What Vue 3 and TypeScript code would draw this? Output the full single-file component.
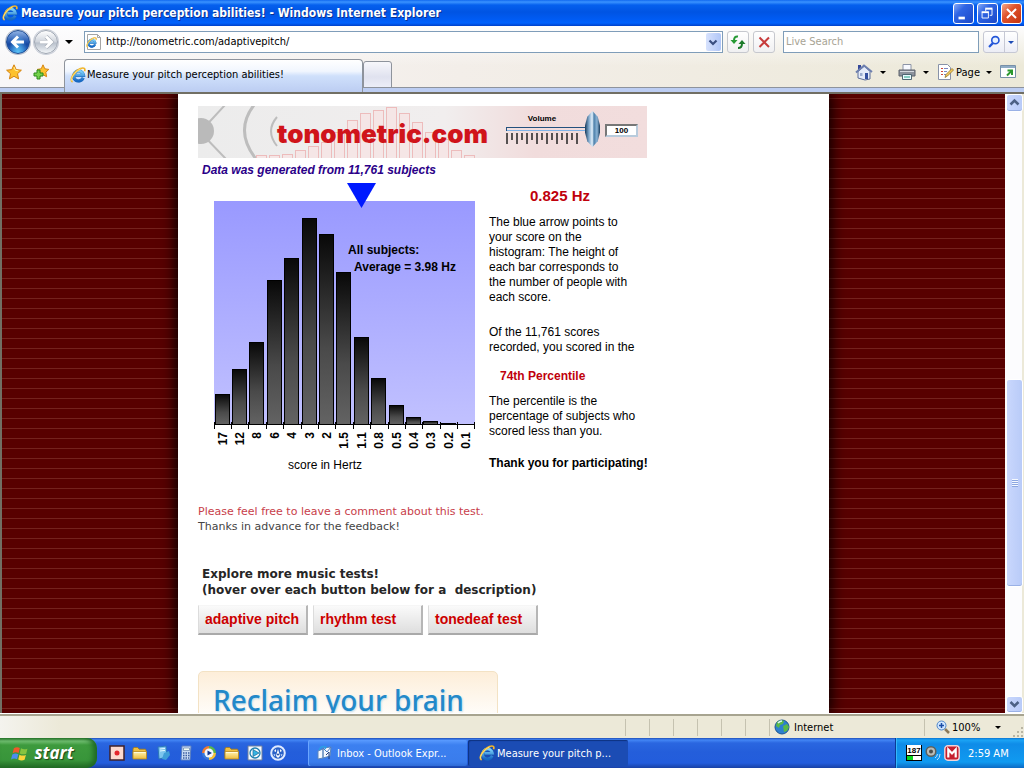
<script setup lang="ts">
import { ref } from 'vue'

interface Bin {
  label: string
  top: number
}

const address = ref('http://tonometric.com/adaptivepitch/')
const search = ref('')
const volume = ref(100)

const bins: Bin[] = [
  { label: '17', top: 212 },
  { label: '12', top: 187 },
  { label: '8', top: 160 },
  { label: '6', top: 98 },
  { label: '4', top: 76 },
  { label: '3', top: 36 },
  { label: '2', top: 52 },
  { label: '1.5', top: 90 },
  { label: '1.1', top: 155 },
  { label: '0.8', top: 196 },
  { label: '0.5', top: 223 },
  { label: '0.4', top: 235 },
  { label: '0.3', top: 239 },
  { label: '0.2', top: 241 },
  { label: '0.1', top: 242 },
]
const baseline = 242
const chartLeft = 16
const pitch = 261 / bins.length

const bannerTops: number[] = [49, 49, 48, 44, 40, 36, 26, 14, 7, 4, 1, 7, 16, 26, 33, 44, 49]
const tests: string[] = ['adaptive pitch', 'rhythm test', 'tonedeaf test']
const panes: number[] = [1, 2, 3, 4, 5, 6]
</script>

<template>
  <div class="desktop">
    <svg class="defs" width="0" height="0" aria-hidden="true">
      <defs>
        <linearGradient id="ieBlue" x1="0" y1="0" x2="0" y2="1">
          <stop offset="0" stop-color="#7fd4fb" />
          <stop offset="1" stop-color="#1668c4" />
        </linearGradient>
        <linearGradient id="folderFill" x1="0" y1="0" x2="0" y2="1">
          <stop offset="0" stop-color="#fff6b4" />
          <stop offset="1" stop-color="#eebc3c" />
        </linearGradient>
        <symbol id="ie" viewBox="0 0 16 16">
          <path d="M13.2 10.8A5 5 0 1 1 13.5 8.3H5.4" fill="none" stroke="#1a66b8" stroke-width="3.2" />
          <path d="M13.2 10.8A5 5 0 1 1 13.5 8.3H5.4" fill="none" stroke="url(#ieBlue)" stroke-width="2.6" />
          <path d="M2.6 15C-1.4 13 4.600 4 10.500 1.600C14 .2 15.600 1.600 14.500 4.300" fill="none" stroke="#f1b52a" stroke-width="1.700" />
          <path d="M2.200 14.300C-.4 12 5 4.200 10.600 2" fill="none" stroke="#fff2a0" stroke-width=".7" />
        </symbol>
        <symbol id="folder" viewBox="0 0 16 16">
          <path d="M1 4q0-1.500 1.500-1.500h3L7.200 4.200H13q1 0 1 1V13H1z" fill="#f0c040" stroke="#a77a14" stroke-width=".8" />
          <path d="M1 6.500h13.500V14H1z" fill="url(#folderFill)" stroke="#b98a1c" stroke-width=".8" />
          <path d="M2 7.500h11.500" stroke="#fffbdc" />
        </symbol>
      </defs>
    </svg>

    <header class="titlebar">
      <svg class="icon16"><use href="#ie" /></svg>
      <h1 class="title">Measure your pitch perception abilities! - Windows Internet Explorer</h1>
      <button class="winbtn" aria-label="Minimize">
        <svg viewBox="0 0 21 21"><path d="M5 15.500h7" stroke="#fff" stroke-width="3" /></svg>
      </button>
      <button class="winbtn" aria-label="Restore">
        <svg viewBox="0 0 21 21" fill="none" stroke="#fff">
          <path d="M8.500 8V5.500h7v7H13" /><path d="M8 5h8" stroke-width="2" />
          <path d="M4.500 9.500h7v6h-7z" /><path d="M4 9h8" stroke-width="2" />
        </svg>
      </button>
      <button class="winbtn close" aria-label="Close">
        <svg viewBox="0 0 21 21"><path d="M5.500 5.500l10 10M15.500 5.500l-10 10" stroke="#fff" stroke-width="2.200" /></svg>
      </button>
    </header>

    <div class="chrome">
      <nav class="navrow" aria-label="Navigation">
        <div class="travel">
          <button class="orb back" aria-label="Back">
            <svg viewBox="0 0 24 24"><path d="M18.500 12H7M12 6L6 12l6 6" fill="none" stroke="#fff" stroke-width="3.200" /></svg>
          </button>
          <button class="orb forward" aria-label="Forward">
            <svg viewBox="0 0 24 24"><path d="M5.500 12H17M12 6l6 6-6 6" fill="none" stroke="#a4aab4" stroke-width="4.400" /><path d="M5.500 12H17M12 6l6 6-6 6" fill="none" stroke="#fff" stroke-width="3.200" /></svg>
          </button>
          <button class="plain caretbtn" aria-label="Recent pages"><i class="caret big"></i></button>
        </div>
        <div class="field address">
          <svg class="icon18" viewBox="0 0 18 18">
            <path d="M2.500 1.500h10l3 3v12h-13z" fill="#fff" stroke="#a5a5a5" /><path d="M12.500 1.500v3h3" fill="none" stroke="#a5a5a5" />
            <use href="#ie" x="1" y="4" width="11" height="11" />
          </svg>
          <input v-model="address" type="text" aria-label="Address" />
          <button class="combo" aria-label="Show address list">
            <svg viewBox="0 0 14 17"><path d="M3.500 6.500L7 10l3.500-3.500" fill="none" stroke="#3a4f80" stroke-width="2.200" /></svg>
          </button>
        </div>
        <button class="toolbtn" aria-label="Refresh">
          <svg viewBox="0 0 20 20">
            <path d="M10 4.500Q6 4 6 8.500" fill="none" stroke="#279a35" stroke-width="2" /><path d="M2.500 8h7L6 12z" fill="#279a35" />
            <path d="M10 16q4 0 4-4.500" fill="none" stroke="#1d7b2b" stroke-width="2" /><path d="M10.500 12h7L14 8z" fill="#1d7b2b" />
          </svg>
        </button>
        <button class="toolbtn" aria-label="Stop">
          <svg viewBox="0 0 20 20"><path d="M5.500 5.500l9.500 9.500M15 5.500L5.500 15" stroke="#c73b3b" stroke-width="2" /></svg>
        </button>
        <div class="field searchbox"><input v-model="search" type="text" placeholder="Live Search" aria-label="Live Search" /></div>
        <div class="searchgo">
          <button class="go" aria-label="Search">
            <svg viewBox="0 0 20 20"><path d="M9 11l-4.500 4.500" stroke="#2456d8" stroke-width="2.500" /><circle cx="11.500" cy="8" r="4" fill="#e8f2ff" stroke="#2456d8" stroke-width="1.800" /></svg>
          </button>
          <button class="godrop" aria-label="Search options"><i class="caret blue"></i></button>
        </div>
      </nav>

      <div class="tabrow">
        <div class="favs">
          <button class="plain" aria-label="Favorites Center">
            <svg class="icon16" viewBox="0 0 16 16"><path d="M8 .8l2.200 4.800 5.200.6-3.900 3.500 1.100 5.200L8 12.300l-4.600 2.600 1.100-5.200L.6 6.200l5.200-.6z" fill="#fdc22e" stroke="#d68412" /><path d="M8 3l1.300 3.300 3 .5" fill="none" stroke="#fff0a0" /></svg>
          </button>
          <button class="plain" aria-label="Add to Favorites">
            <svg class="icon16" viewBox="0 0 16 16"><path d="M10 .8l1.800 4 4 .6-3 2.800.8 4.500-3.600-2-3.600 2 .8-4.500-3-2.800 4-.6z" fill="#fdc22e" stroke="#d68412" /><path d="M4 6h3v3h3v3H7v3H4v-3H1V9h3z" fill="#75d24b" stroke="#2a8a1d" /></svg>
          </button>
        </div>
        <button class="tab"><svg class="icon16"><use href="#ie" /></svg><span>Measure your pitch perception abilities!</span></button>
        <button class="newtab" aria-label="New Tab"></button>
        <div class="commands">
          <button class="plain cmd home" aria-label="Home">
            <svg class="icon18" viewBox="0 0 18 18"><path d="M3 2h3v5H3z" fill="#34489a" /><path d="M3 8.500L9.500 3 15 8.500V16l-5 1-7-2z" fill="#e4ebfa" stroke="#5b6c98" /><path d="M1 9.500L9 2.500l8 6.500" fill="none" stroke="#6d7fae" stroke-width="2" /><path d="M5 10h2.500v3H5z" fill="#9aaccf" /><path d="M10 10h3v6h-3z" fill="#3450a0" /></svg>
            <i class="caret"></i>
          </button>
          <button class="plain cmd" aria-label="Print">
            <svg class="icon18" viewBox="0 0 18 18"><path d="M5 1.500h8V8H5z" fill="#f7f9ff" stroke="#8c94a6" /><path d="M1 7h16v6H1z" fill="#8c929c" stroke="#5c626c" /><path d="M2 8.500h14" stroke="#d4d8dd" /><path d="M4.500 11.500h9v5h-9z" fill="#e9fbff" stroke="#4f6772" /><path d="M6 14h6" stroke="#29a487" /></svg>
            <i class="caret"></i>
          </button>
          <button class="plain cmd page">
            <svg class="icon18" viewBox="0 0 18 18"><path d="M2.500 1.500h9l3 3v12h-12z" fill="#fff" stroke="#8892a8" /><path d="M5 5.500h2M5 8.500h2M5 11.500h2" stroke="#d04838" /><path d="M8 5.500h4M8 8.500h3M8 11.500h2" stroke="#7b88c2" /><path d="M9 14.500l1-3 6-6 1.500 1.500-6 6z" fill="#f4c95a" stroke="#94732a" stroke-width=".8" /></svg>
            <span>Page</span><i class="caret"></i>
          </button>
          <button class="plain cmd" aria-label="Expand">
            <svg class="icon18" viewBox="0 0 18 18"><path d="M1.500 2.500h15v12h-15z" fill="#fff" stroke="#7890a8" /><path d="M2 4h14" stroke="#8eabc5" stroke-width="2" /><path d="M8.500 7.500H13V12" fill="none" stroke="#2c982e" stroke-width="2" /><path d="M13 7.500l-5 5" stroke="#2c982e" stroke-width="2" /></svg>
          </button>
        </div>
      </div>
    </div>

    <div class="viewport">
      <div class="backdrop">
        <main class="page-col">
          <div class="banner">
            <svg class="banner-art" viewBox="0 0 449 52" preserveAspectRatio="none" aria-hidden="true">
              <g fill="none" stroke="#bdbdbd">
                <path d="M3 25L27-1M3 27L28 53" stroke-width="2" />
                <path d="M56-1Q36 25 58 53" stroke-width="3" />
                <path d="M79 11Q67 25 79 40" stroke-width="2" />
              </g>
              <circle cx="3" cy="25" r="13" fill="#bababa" />
              <g fill="#f5e6e6" stroke="#edbcbc">
                <rect v-for="(t, i) in bannerTops" :key="i" :x="58.5 + i * 13" :y="t + 0.5" width="10" :height="56 - t" />
              </g>
              <path d="M308 21.500h80" stroke="#24517e" /><path d="M308 24.500h80" stroke="#7fb3e8" />
              <path d="M308.500 21v4" stroke="#24517e" />
              <g stroke="#222" stroke-width="1.500">
                <path v-for="n in 15" :key="n" :d="`M${304 + n * 5} 27v${n % 2 ? 11 : 7}`" />
              </g>
            </svg>
            <span class="brand">tonometric.com</span>
            <label class="volume"><span>Volume</span><input v-model.number="volume" type="range" min="0" max="100" /></label>
            <input v-model.number="volume" class="volnum" type="text" aria-label="Volume level" />
          </div>

          <section class="results">
            <h2 class="generated">Data was generated from 11,761 subjects</h2>
            <div class="split">
              <svg class="chart" width="284" height="298" viewBox="0 0 284 298" role="img">
                <defs>
                  <linearGradient id="plot" x1="0" y1="0" x2="0" y2="1">
                    <stop offset="0" stop-color="#9999ff" /><stop offset="1" stop-color="#c1c1ff" />
                  </linearGradient>
                  <linearGradient id="bar" x1="0" y1="0" x2="0" y2="1">
                    <stop offset="0" stop-color="#080808" /><stop offset=".6" stop-color="#4a4a4a" /><stop offset="1" stop-color="#636363" />
                  </linearGradient>
                </defs>
                <rect :x="chartLeft" y="19" width="261" :height="baseline - 19" fill="url(#plot)" />
                <path d="M149 1h29L163.500 26z" fill="#0019ff" />
                <g v-for="(b, i) in bins" :key="b.label">
                  <rect v-if="b.top < baseline" :x="Math.floor(chartLeft + i * pitch) + 1.5" :y="b.top + 0.5" width="14" :height="baseline - b.top" fill="url(#bar)" stroke="#000" />
                  <path :d="`M${Math.floor(chartLeft + i * pitch) + 0.5} 240v7`" stroke="#000" />
                  <text class="tick" :transform="`translate(${Math.floor(chartLeft + i * pitch) + 13} 250) rotate(-90)`" text-anchor="end">{{ b.label }}</text>
                </g>
                <path d="M16 242.500h261M276.500 240v7" stroke="#000" />
                <text class="note" x="150" y="72">All subjects:</text>
                <text class="note" x="156" y="89">Average = 3.98 Hz</text>
                <text class="axis" x="90" y="287">score in Hertz</text>
              </svg>
              <div class="explain">
                <h3 class="score">0.825 Hz</h3>
                <p>The blue arrow points to<br />your score on the<br />histogram: The height of<br />each bar corresponds to<br />the number of people with<br />each score.</p>
                <p class="gap">Of the 11,761 scores<br />recorded, you scored in the</p>
                <h3 class="percent">74th Percentile</h3>
                <p>The percentile is the<br />percentage of subjects who<br />scored less than you.</p>
                <p class="thanks">Thank you for participating!</p>
              </div>
            </div>
          </section>

          <p class="feedback"><a href="#comment">Please feel free to leave a comment about this test.</a><br />Thanks in advance for the feedback!</p>
          <p class="explore">Explore more music tests!<br />(hover over each button below for a &nbsp;description)</p>
          <div class="tests"><button v-for="t in tests" :key="t">{{ t }}</button></div>
          <aside class="ad">Reclaim your brain</aside>
        </main>
      </div>
      <div class="scroll">
        <button aria-label="Scroll up"><svg viewBox="0 0 15 16"><path d="M3.500 9.500l4-4 4 4" fill="none" stroke="#4d6185" stroke-width="2.500" /></svg></button>
        <div class="thumb"><i></i></div>
        <button class="down" aria-label="Scroll down"><svg viewBox="0 0 15 16"><path d="M3.500 6l4 4 4-4" fill="none" stroke="#4d6185" stroke-width="2.500" /></svg></button>
      </div>
    </div>

    <footer class="status">
      <i v-for="p in panes" :key="p" class="pane"></i>
      <div class="zone">
        <svg class="icon16" viewBox="0 0 16 16"><circle cx="8" cy="8" r="7" fill="#2c7fd0" stroke="#1d5591" /><path d="M3 3q4-3 7-1l-1 3-3 1-1 3-3-2zM9 7l4-2 2 3-2 4-3 1z" fill="#59b947" /><path d="M4 4q2-2 4-2" fill="none" stroke="#d5f2ff" stroke-width="1.500" /></svg>
        <span>Internet</span>
      </div>
      <button class="plain zoom">
        <svg class="icon14" viewBox="0 0 14 14"><path d="M9 9l4 4" stroke="#8d7a58" stroke-width="2.500" /><circle cx="5.500" cy="5.500" r="4.500" fill="#cfe6ff" stroke="#4f86c9" /><path d="M3 5.500h5M5.500 3v5" stroke="#1c4fa8" stroke-width="1.500" /></svg>
        <span class="level">100%</span><i class="caret"></i>
      </button>
      <svg class="grip" viewBox="0 0 12 12"><path d="M9 1h2v2H9zM9 5h2v2H9zM9 9h2v2H9zM5 5h2v2H5zM5 9h2v2H5zM1 9h2v2H1z" fill="#b9b5a3" /></svg>
    </footer>

    <div class="taskbar">
      <button class="start">
        <svg viewBox="0 0 20 20">
          <path d="M3 4.500Q6 2.500 9.300 4.200L8 9.500Q5 8 1.700 9.700z" fill="#f0582b" />
          <path d="M10.500 4.600q3.200 1.800 6.800.4L16 10.200q-3.500 1.400-6.800-.3z" fill="#86c440" />
          <path d="M1.400 11q3.200-1.700 6.300-.2l-1.300 5.300Q3.300 14.500 0 16.200z" fill="#4a8df0" />
          <path d="M8.900 11.200q3.200 1.600 6.800.3l-1.400 5.200q-3.400 1.400-6.700-.3z" fill="#fbd43a" />
        </svg>
        <span>start</span>
      </button>
      <div class="quick">
        <button class="plain" aria-label="Recorder"><svg class="icon16" viewBox="0 0 16 16"><path d="M1 1h14v14H1z" fill="#fbd9d0" stroke="#402028" stroke-width="1.500" /><circle cx="8" cy="8" r="2.500" fill="#e4242c" /></svg></button>
        <button class="plain" aria-label="Folder"><svg class="icon16"><use href="#folder" /></svg></button>
        <button class="plain" aria-label="Show documents"><svg class="icon16" viewBox="0 0 16 16"><path d="M3 2l8-1 1 11-8 2z" fill="#7cc5ee" stroke="#2c77b8" /><path d="M5 4l5-.6M5 6l5-.6" stroke="#e5f8ff" /><path d="M9 8l5-2 1 4-4 5-4-1z" fill="#3f9ed8" /></svg></button>
        <button class="plain" aria-label="Calculator"><svg class="icon16" viewBox="0 0 16 16"><path d="M4 1h9l-1 14H3z" fill="#cadcf5" stroke="#5a7fc0" /><path d="M5.500 3h6v2.500h-6z" fill="#f5fff5" stroke="#53719f" stroke-width=".6" /><path d="M5 8h6.500M5 10.500h6.500M5 13h6" stroke="#3c5da0" stroke-width="1.400" stroke-dasharray="1.500 1" /></svg></button>
        <button class="plain" aria-label="Media player"><svg class="icon16" viewBox="0 0 16 16"><path d="M8 1a7 7 0 0 0-7 7h3a4 4 0 0 1 4-4z" fill="#ef7d31" /><path d="M8 1a7 7 0 0 1 7 7h-3a4 4 0 0 0-4-4z" fill="#59b64a" /><path d="M1 8a7 7 0 0 0 7 7v-3a4 4 0 0 1-4-4z" fill="#3878d8" /><path d="M15 8a7 7 0 0 1-7 7v-3a4 4 0 0 0 4-4z" fill="#f5c138" /><circle cx="8" cy="8" r="4.500" fill="#f2f7ff" /><path d="M6.500 5.500L11 8l-4.500 2.500z" fill="#14388e" /></svg></button>
        <button class="plain" aria-label="Second folder"><svg class="icon16"><use href="#folder" /></svg></button>
        <button class="plain" aria-label="Video player"><svg class="icon16" viewBox="0 0 16 16"><path d="M1 1h14v14H1z" fill="#f5faff" stroke="#6e7f9c" /><circle cx="8" cy="8" r="5" fill="#f5fbff" stroke="#1c7fb0" stroke-width="1.300" /><path d="M6 4.500L12 8l-6 3.500z" fill="#35b4e4" stroke="#1f6b93" stroke-width=".7" /></svg></button>
        <button class="plain" aria-label="Compass browser"><svg class="icon16" viewBox="0 0 16 16"><circle cx="8" cy="8" r="6.800" fill="#2b62c8" stroke="#dfeaff" stroke-width="2" /><path d="M4 6l2-2v3zM10 4l2 2-2 1zM8 4l2 7-2 2-2-2z" fill="#fff" /><circle cx="8" cy="9.500" r="1" fill="#1b4498" /><path d="M3.500 9l2 .5-1 2zM12.500 9l-2 .5 1 2z" fill="#c6dbff" /></svg></button>
      </div>
      <div class="tasks">
        <button class="task">
          <svg class="icon16" viewBox="0 0 16 16"><path d="M1 6l5-2v9l-5 1zM6 3l8-1-1 9-7 2z" fill="#f4f8ff" stroke="#5d86bb" /><path d="M6 3l4 4 4-5" fill="none" stroke="#4b7bc0" /><path d="M2 5q2-5 7-3L8 4" fill="none" stroke="#2b9be5" stroke-width="1.500" /><path d="M9 10l3-3v7" fill="none" stroke="#243f7d" /></svg>
          <span>Inbox - Outlook Expr...</span>
        </button>
        <button class="task active"><svg class="icon16"><use href="#ie" /></svg><span>Measure your pitch p...</span></button>
      </div>
      <div class="tray">
        <span class="meter"><b>187</b><i></i></span>
        <svg class="icon16" viewBox="0 0 16 16"><circle cx="6" cy="6.500" r="4.800" fill="#b9bcb8" stroke="#5c605d" stroke-width="1.500" /><circle cx="6" cy="6.500" r="2" fill="#4b4e4c" /><path d="M10 13q2-1 2.500-4M12 15q3-2 3-6" fill="none" stroke="#b9dcff" /></svg>
        <svg class="icon16" viewBox="0 0 16 16"><rect x=".8" y=".8" width="14.400" height="14.400" rx="3" fill="#c61f2e" stroke="#f3d4d8" stroke-width="1.400" /><path d="M4.300 12.500V4.500L8 8.500l3.700-4v8" fill="none" stroke="#fff" stroke-width="2.200" /></svg>
        <time>2:59 AM</time>
      </div>
    </div>
  </div>
</template>

<style>
html,
body {
  margin: 0;
  overflow: hidden;
}
</style>

<style scoped>
.desktop {
  display: flex;
  flex-direction: column;
  height: 100vh;
  overflow: hidden;
  font-family: 'DejaVu Sans Condensed', 'DejaVu Sans', sans-serif;
  font-size: 11px;
  color: #000;
}
.desktop * { box-sizing: border-box; }
.defs { position: absolute; }
button, input { font: inherit; color: inherit; margin: 0; padding: 0; }
button { display: flex; align-items: center; justify-content: center; white-space: nowrap; }
svg { display: block; flex: none; }
h1, h2, h3, p { margin: 0; }
.plain { border: 0; background: none; }
.icon14 { width: 14px; height: 14px; }
.icon16 { width: 16px; height: 16px; }
.icon18 { width: 18px; height: 18px; }
.caret { display: block; border: 3px solid transparent; border-top-color: #000; border-bottom: 0; }
.caret.big { border-width: 4px 4px 0; }
.caret.blue { border-top-color: #1d4bb5; }

.titlebar {
  display: flex;
  align-items: center;
  flex: none;
  height: 26px;
  padding: 0 2px;
  gap: 3px;
  background: linear-gradient(#1169f0 0, #3a93ff 2px, #0560ee 5px, #0054e3 12px, #005cf5 20px, #0061fd 23px, #0040c8 26px);
}
.title {
  flex: 1;
  font-size: 12px;
  font-weight: bold;
  line-height: 26px;
  color: #fff;
  text-shadow: 1px 1px 0 #0a2f8f;
  white-space: nowrap;
}
.winbtn {
  width: 21px;
  height: 21px;
  border: 1px solid #fff;
  border-radius: 3px;
  background: linear-gradient(135deg, #86aaf8, #2f65e4 35%, #1c48c8);
}
.winbtn svg { width: 19px; height: 19px; }
.winbtn.close { background: linear-gradient(135deg, #f5a88a, #e0532c 40%, #c43410); }

.chrome {
  flex: none;
  background: linear-gradient(#fdfdfe, rgba(255, 255, 255, 0) 40px), linear-gradient(90deg, #f8f7f8, #f3eee9 45%, #ece9d8);
}
.navrow { display: flex; align-items: center; height: 32px; padding-right: 6px; }
.travel { display: flex; align-items: center; gap: 4px; width: 84px; padding-left: 6px; }
.orb { width: 24px; height: 24px; border-radius: 50%; }
.orb svg { width: 22px; height: 22px; }
.back {
  border: 1px solid #1c4a92;
  background: radial-gradient(ellipse at 50% 100%, #5cc5f8, rgba(60, 140, 230, 0) 60%), linear-gradient(#8fb2e4, #2c60b6 45%, #1648a2 60%, #2a72cc);
  box-shadow: 0 0 0 1px #b4bccb;
}
.forward {
  border: 1px solid #9ea6b2;
  background: linear-gradient(#fff, #d0d5dd 48%, #b9c1cc 55%, #f2f5f8);
  box-shadow: 0 0 0 1px #c9ced8;
}
.caretbtn { width: 14px; height: 20px; }
.field { display: flex; align-items: center; height: 22px; border: 1px solid #7f9db9; background: #fff; }
.field input { flex: 1; min-width: 0; border: 0; outline: 0; background: none; line-height: 20px; }
.address { flex: 640; margin-right: 4px; }
.address input { padding-left: 3px; }
.combo { width: 15px; height: 18px; margin-right: 1px; border: 0; border-radius: 2px; background: linear-gradient(90deg, #d7e2fd, #b0c6f7); }
.combo svg { width: 14px; height: 17px; }
.toolbtn { width: 22px; height: 22px; margin-right: 4px; border: 1px solid #c6c8ce; border-radius: 3px; background: linear-gradient(#fff, #f0f0f2); }
.toolbtn svg { width: 20px; height: 20px; }
.searchbox { flex: 195; margin-left: 4px; margin-right: 4px; }
.searchbox input { padding-left: 2px; }
.searchbox input::placeholder { color: #a7a394; opacity: 1; }
.searchgo { display: flex; height: 22px; border: 1px solid #c6c8d4; border-radius: 3px; background: linear-gradient(#fff, #ecedf6); }
.go { width: 20px; border: 0; background: none; }
.go svg { width: 18px; height: 18px; }
.godrop { width: 13px; border: 0; border-left: 1px solid #c6c8d4; background: none; }

.tabrow { display: flex; align-items: flex-end; height: 36px; border-bottom: 2px solid #716f64; box-shadow: inset 0 -4px #bccdf2, inset 0 -5px #8e939c; }
.favs { display: flex; gap: 11px; width: 64px; padding-left: 6px; margin-bottom: 12px; }
.tab {
  flex: 0 1 299px;
  justify-content: flex-start;
  gap: 1px;
  height: 33px;
  padding: 0 5px 3px;
  border: 1px solid #8e939c;
  border-bottom: 0;
  border-radius: 4px 4px 0 0;
  background: linear-gradient(#fff, #f1f6fe 35%, #cfe0fb 50%, #bccdf2);
}
.tab span { line-height: 16px; }
.newtab { width: 29px; height: 27px; margin-bottom: 4px; border: 1px solid #8e939c; border-radius: 3px 3px 0 0; background: linear-gradient(#f7f7fb, #e0e2ef 60%, #eceef8); }
.commands { display: flex; align-items: center; margin-left: auto; margin-bottom: 10px; padding-right: 7px; gap: 7px; }
.cmd { height: 20px; gap: 7px; }
.home { margin-right: 5px; }
.page { gap: 2px; }
.page .caret { margin-left: 4px; }

.viewport { display: flex; flex: 1; min-height: 0; padding-left: 2px; background: #716f64; border-bottom: 1px solid #fff; }
.backdrop {
  flex: 1;
  min-width: 0;
  overflow: hidden;
  background: repeating-linear-gradient(#580000 0, #580000 4px, #74221d 4px, #74221d 5px, #580000 5px, #580000 10px);
}
.page-col {
  max-width: 651px;
  height: 100%;
  margin: 0 auto;
  padding: 12px 20px 0;
  background: #fff;
  box-shadow: 0 0 14px 2px #000;
}

.banner {
  position: relative;
  display: flex;
  align-items: center;
  width: 449px;
  height: 52px;
  overflow: hidden;
  background: linear-gradient(90deg, #ececec, #f1eeee 55%, #f1dcdc 75%, #f2dddd);
}
.banner-art { position: absolute; inset: 0; width: 100%; height: 100%; }
.brand { position: relative; width: 228px; margin-left: 79px; padding-top: 4px; font: 900 26px/48px Inter, 'Liberation Sans', sans-serif; color: #d0141a; }
.volume { position: relative; display: flex; flex-direction: column; align-items: center; width: 96px; height: 52px; font: bold 8px/10px 'Liberation Sans', Arial, sans-serif; }
.volume span { margin: 8px 22px 0 0; }
.volume input { appearance: none; width: 94px; height: 40px; margin-top: -15px; background: none; }
.volume input::-webkit-slider-thumb {
  appearance: none;
  width: 15px;
  height: 36px;
  background: linear-gradient(90deg, #163a5c, #7ba4c8 25%, #e3f1fc 48%, #4d80aa 60%, #8bb4d6 80%, #163a5c);
  clip-path: polygon(50% 0, 85% 16%, 100% 40%, 100% 60%, 85% 84%, 50% 100%, 15% 84%, 0 60%, 0 40%, 15% 16%);
}
.volnum { position: relative; width: 33px; height: 13px; margin: -4px 0 0 4px; border: 2px solid #8c9299; border-color: #777 #b8cbdc #b8cbdc #777; background: #fff; font: bold 8px/9px 'Liberation Sans', Arial, sans-serif; text-align: center; }

.results { font-family: 'Liberation Sans', Arial, sans-serif; }
.generated { height: 24px; padding-left: 4px; font-size: 12px; font-style: italic; font-weight: bold; line-height: 24px; color: #2a0088; }
.split { display: flex; gap: 7px; height: 298px; }
.tick { font-size: 12px; font-weight: bold; }
.note { font-size: 12px; font-weight: bold; }
.axis { font-size: 12px; }
.explain { font-size: 12px; line-height: 15px; white-space: nowrap; }
.explain h3 { color: #c0000c; font-weight: bold; }
.explain .score { padding: 5px 0 10px 41px; font-size: 15px; line-height: 18px; }
.explain .gap { margin-top: 20px; }
.explain .percent { padding: 14px 0 10px 11px; font-size: 12px; line-height: 15px; }
.explain .thanks { margin-top: 17px; font-weight: bold; }

.feedback { margin-top: 24px; font: 11px/15px 'DejaVu Sans', Verdana, sans-serif; color: #444; white-space: nowrap; }
.feedback a { color: #c8404a; text-decoration: none; }
.explore { margin-top: 32px; padding-left: 4px; font: bold 12px/16px 'DejaVu Sans', Verdana, sans-serif; color: #262626; white-space: nowrap; }
.tests { display: flex; gap: 5px; margin-top: 7px; }
.tests button {
  justify-content: flex-start;
  width: 110px;
  height: 30px;
  padding: 0 0 1px 6px;
  border: solid;
  border-width: 1px 2px 2px 1px;
  border-color: #f6f6f6 #b6b6b6 #a9a9a9 #dcdcdc;
  background: linear-gradient(#fafafa, #dedede);
  font: bold 14px/20px 'Liberation Sans', Arial, sans-serif;
  color: #cc0000;
}
.ad { width: 300px; height: 250px; margin-top: 36px; padding: 9px 14px; border: 1px solid #f3e2c4; border-radius: 5px; background: linear-gradient(#fdeed9, #fff 50px); font: 500 28px/38px 'Noto Sans', sans-serif; color: #2389c9; text-shadow: 1px 1px 2px #b9d9ec; white-space: nowrap; }

.scroll { display: grid; grid-template-rows: 18px 267fr 209fr 109fr 17px; flex: none; width: 19px; padding: 0 2px 0 1px; background: #fcfcfe; border-right: 2px solid #ece9d8; }
.scroll button, .thumb { border: 1px solid #fff; border-radius: 3px; background: linear-gradient(90deg, #c9d7fd, #b9cbf8); box-shadow: inset 0 -1px #9ab1e6; }
.scroll svg { width: 15px; height: 16px; }
.thumb { grid-row: 3; display: flex; align-items: center; justify-content: center; }
.thumb i { width: 6px; height: 8px; background: repeating-linear-gradient(#f5f9ff 0, #f5f9ff 1px, #8ca6e0 1px, #8ca6e0 2px); }
.down { grid-row: 5; }

.status { display: flex; align-items: center; justify-content: flex-end; flex: none; height: 24px; border-top: 2px solid #a7a490; background: linear-gradient(90deg, #f4f3ee, #ece9d8 60px); }
.pane { width: 24px; height: 17px; border-left: 1px solid #c5c2b0; }
.zone { display: flex; align-items: center; gap: 4px; width: 155px; height: 17px; padding-left: 4px; border-left: 1px solid #c5c2b0; }
.zoom { gap: 2px; width: 88px; height: 17px; padding-left: 11px; justify-content: flex-start; border-left: 1px solid #c5c2b0; }
.level { width: 41px; text-align: left; }
.grip { width: 12px; height: 12px; align-self: flex-end; }

.taskbar { display: flex; align-items: stretch; flex: none; height: 30px; color: #fff; background: linear-gradient(#1f4fb8 0, #4386f5 2px, #2a66e0 5px, #245edb 14px, #235ddc 25px, #1941a5 30px); }
.start {
  gap: 4px;
  width: 97px;
  padding-right: 12px;
  border: 0;
  border-radius: 0 10px 10px 0;
  background: linear-gradient(#2f7d2f 0, #74c274 3px, #3d9a3d 7px, #38953a 22px, #226b24 30px);
  box-shadow: inset -4px 0 5px #1f6a25;
  font: italic bold 17px/28px 'Open Sans', 'Noto Sans', sans-serif;
  text-shadow: 1px 1px 1px #1c4419;
}
.start svg { width: 19px; height: 19px; }
.quick { display: flex; align-items: center; gap: 7px; width: 211px; padding-left: 12px; }
.tasks { display: flex; flex: 1; align-items: center; gap: 1px; min-width: 0; }
.task { justify-content: flex-start; gap: 4px; width: 159px; height: 26px; padding-left: 9px; border: 0; border-radius: 2px; background: linear-gradient(#5a9bff, #3c80f0 5px, #3a7cec 22px, #2f6bd6); box-shadow: inset 1px 0 #6aa5ff; }
.task.active { width: 160px; gap: 2px; padding-left: 11px; background: #1b4cb4; box-shadow: inset 1px 1px 1px #0e3280; }
.tray { display: flex; align-items: center; gap: 3px; width: 129px; padding-left: 10px; border-left: 1px solid #0b3a94; background: linear-gradient(#0c73d0 0, #1ba4f5 2px, #0f8ce8 6px, #109af0 24px, #0c6ac4 30px); box-shadow: inset 1px 0 #36b8fa; }
.meter { width: 16px; height: 16px; background: #fff; border: 1px solid #000; border-top: 0; color: #000; }
.meter b { display: block; height: 11px; font: bold 8px/11px 'Liberation Sans', Arial, sans-serif; border-bottom: 1px solid #000; text-align: center; }
.meter i { display: block; width: 6px; height: 4px; background: #0bd81d; }
.tray time { margin-left: 5px; }
</style>
